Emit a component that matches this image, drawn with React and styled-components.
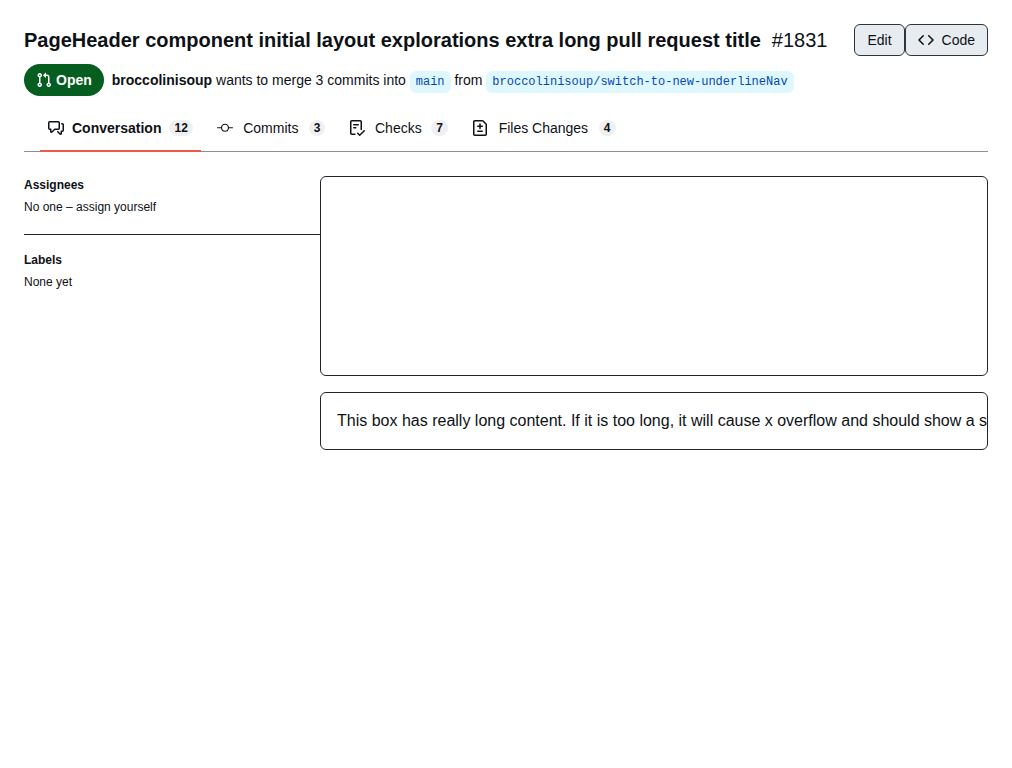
import React from 'react';
import styled, { createGlobalStyle } from 'styled-components';

const GlobalStyle = createGlobalStyle`
  * { box-sizing: border-box; }
  body {
    margin: 0;
    background: #fff;
    color: #0e1116;
    font-family: "Liberation Sans", Arial, sans-serif;
    font-size: 14px;
    line-height: 20px;
  }
`;

const Page = styled.div`
  padding: 24px;
`;

const TitleRow = styled.header`
  display: flex;
  align-items: center;
  height: 32px;
`;

const Title = styled.h1`
  margin: 0;
  font-size: 20px;
  font-weight: 700;
  line-height: 32px;
  white-space: nowrap;
`;

const Number = styled.span`
  margin-left: 11px;
  font-size: 20px;
  line-height: 32px;
`;

const Actions = styled.div`
  display: flex;
  margin-left: auto;
`;

const Button = styled.button`
  display: flex;
  align-items: center;
  gap: 8px;
  height: 32px;
  padding: 0 12px;
  border: 1px solid #2f353d;
  border-radius: 6px;
  background: #e7ecf0;
  color: #0e1116;
  font: 500 14px/20px "Liberation Sans", Arial, sans-serif;
`;

const Description = styled.div`
  display: flex;
  align-items: center;
  gap: 8px;
  height: 32px;
  margin-top: 8px;
`;

const StateLabel = styled.span`
  display: flex;
  align-items: center;
  gap: 4px;
  height: 32px;
  padding: 0 12px;
  border-radius: 16px;
  background: #055d20;
  color: #fff;
  font-weight: 700;
`;

const Summary = styled.div`
  padding-top: 2px;
  white-space: nowrap;
`;

const Branch = styled.a`
  padding: 4px 6px;
  border-radius: 6px;
  background: #dff7ff;
  color: #0349b4;
  font: 12px/20px "Liberation Mono", monospace;
`;

const Tabs = styled.nav`
  display: flex;
  gap: 8px;
  height: 48px;
  margin-top: 8px;
  padding: 0 16px;
  box-shadow: inset 0 -1px #88929d;
`;

const Tab = styled.a`
  display: flex;
  align-items: center;
  gap: 8px;
  padding: 0 8px;
  box-shadow: inset 0 -2px ${(p) => (p.$active ? '#ef5b48' : 'transparent')};
  font-weight: ${(p) => (p.$active ? 700 : 400)};
`;

/* The hidden bold copy keeps the width stable when a tab becomes active. */
const TabLabel = styled.span`
  display: inline-flex;
  flex-direction: column;
  align-items: center;
  height: 20px;

  &::after {
    content: attr(data-content);
    height: 0;
    visibility: hidden;
    font-weight: 700;
  }
`;

const Counter = styled.span`
  padding: 2px 5px;
  border-radius: 20px;
  background: #eff0f2;
  font-size: 12px;
  font-weight: 700;
  line-height: 12px;
`;

const Content = styled.div`
  display: flex;
  margin-top: 24px;
`;

const Sidebar = styled.aside`
  width: 296px;
  flex: none;
  font-size: 12px;
  line-height: 18px;
`;

const Section = styled.section`
  height: ${(p) => (p.$divided ? '59px' : 'auto')};
  border-bottom: ${(p) => (p.$divided ? '1px solid #20252c' : '0')};
  margin-bottom: 16px;
`;

const SectionTitle = styled.h2`
  margin: 0 0 4px;
  font-size: 12px;
  font-weight: 700;
  line-height: 18px;
`;

const Main = styled.main`
  display: flex;
  flex: 1;
  flex-direction: column;
  gap: 16px;
  min-width: 0;
`;

const Box = styled.div`
  height: ${(p) => p.$height};
  padding: 16px;
  overflow: hidden;
  border: 1px solid #20252c;
  border-radius: 6px;
  font-size: 16px;
  line-height: 24px;
  white-space: nowrap;
`;

const Glyph = styled.svg`
  display: block;
  flex: none;
  fill: currentColor;
`;

const paths = {
  pull: 'M1.5 3.25a2.25 2.25 0 1 1 3 2.122v5.256a2.251 2.251 0 1 1-1.5 0V5.372A2.25 2.25 0 0 1 1.5 3.25Zm5.677-.177L9.573.677A.25.25 0 0 1 10 .854V2.5h1A2.5 2.5 0 0 1 13.5 5v5.628a2.251 2.251 0 1 1-1.5 0V5a1 1 0 0 0-1-1h-1v1.646a.25.25 0 0 1-.427.177L7.177 3.427a.25.25 0 0 1 0-.354ZM3.75 2.5a.75.75 0 1 0 0 1.5.75.75 0 0 0 0-1.5Zm0 9.5a.75.75 0 1 0 0 1.5.75.75 0 0 0 0-1.5Zm8.25.75a.75.75 0 1 0 1.5 0 .75.75 0 0 0-1.5 0Z',
  discussion: 'M1.75 1h8.5c.966 0 1.75.784 1.75 1.75v5.5A1.75 1.75 0 0 1 10.25 10H7.061l-2.574 2.573A1.458 1.458 0 0 1 2 11.543V10h-.25A1.75 1.75 0 0 1 0 8.25v-5.5C0 1.784.784 1 1.75 1ZM1.5 2.75v5.5c0 .138.112.25.25.25h1a.75.75 0 0 1 .75.75v2.19l2.72-2.72a.749.749 0 0 1 .53-.22h3.5a.25.25 0 0 0 .25-.25v-5.5a.25.25 0 0 0-.25-.25h-8.5a.25.25 0 0 0-.25.25Zm13 2a.25.25 0 0 0-.25-.25h-.5a.75.75 0 0 1 0-1.5h.5c.966 0 1.75.784 1.75 1.75v5.5A1.75 1.75 0 0 1 14.25 12H14v1.543a1.458 1.458 0 0 1-2.487 1.03L9.22 12.28a.749.749 0 0 1 .326-1.275.749.749 0 0 1 .734.215l2.22 2.22v-2.19a.75.75 0 0 1 .75-.75h1a.25.25 0 0 0 .25-.25Z',
  commit: 'M11.97 8.25a4 4 0 0 1-7.94 0H.5a.5.5 0 0 1 0-1h3.53a4 4 0 0 1 7.94 0h3.53a.5.5 0 0 1 0 1Zm-1.07-.5a2.9 2.9 0 1 0-5.8 0 2.9 2.9 0 0 0 5.8 0Z',
  checklist: 'M2.5 1.75v11.5c0 .138.112.25.25.25h3.17a.75.75 0 0 1 0 1.5H2.75A1.75 1.75 0 0 1 1 13.25V1.75C1 .784 1.784 0 2.75 0h8.5C12.216 0 13 .784 13 1.75v7.736a.75.75 0 0 1-1.5 0V1.75a.25.25 0 0 0-.25-.25h-8.5a.25.25 0 0 0-.25.25Zm13.274 9.537v-.001l-4.557 4.45a.75.75 0 0 1-1.055-.008l-1.943-1.95a.75.75 0 0 1 1.062-1.058l1.419 1.425 4.026-3.932a.75.75 0 1 1 1.048 1.074ZM4.75 4h4.5a.75.75 0 0 1 0 1.5h-4.5a.75.75 0 0 1 0-1.5ZM4 7.75A.75.75 0 0 1 4.75 7h2a.75.75 0 0 1 0 1.5h-2A.75.75 0 0 1 4 7.75Z',
  diff: 'M1 1.75C1 .784 1.784 0 2.75 0h7.586c.464 0 .909.184 1.237.513l2.914 2.914c.329.328.513.773.513 1.237v9.586A1.75 1.75 0 0 1 13.25 16H2.75A1.75 1.75 0 0 1 1 14.25Zm1.75-.25a.25.25 0 0 0-.25.25v12.5c0 .138.112.25.25.25h10.5a.25.25 0 0 0 .25-.25V4.664a.25.25 0 0 0-.073-.177l-2.914-2.914a.25.25 0 0 0-.177-.073ZM8 3.25a.75.75 0 0 1 .75.75v1.5h1.5a.75.75 0 0 1 0 1.5h-1.5v1.5a.75.75 0 0 1-1.5 0V7h-1.5a.75.75 0 0 1 0-1.5h1.5V4A.75.75 0 0 1 8 3.25Zm-3 8a.75.75 0 0 1 .75-.75h4.5a.75.75 0 0 1 0 1.5h-4.5a.75.75 0 0 1-.75-.75Z',
  code: 'm11.28 3.22 4.25 4.25a.75.75 0 0 1 0 1.06l-4.25 4.25a.749.749 0 0 1-1.275-.326.749.749 0 0 1 .215-.734L13.94 8l-3.72-3.72a.749.749 0 0 1 .326-1.275.749.749 0 0 1 .734.215Zm-6.56 0a.751.751 0 0 1 1.042.018.751.751 0 0 1 .018 1.042L2.06 8l3.72 3.72a.749.749 0 0 1-.326 1.275.749.749 0 0 1-.734-.215L.47 8.53a.75.75 0 0 1 0-1.06Z',
};

const Icon = ({ name }) => (
  <Glyph width="16" height="16" viewBox="0 0 16 16" aria-hidden="true">
    <path d={paths[name]} />
  </Glyph>
);

const tabs = [
  { label: 'Conversation', icon: 'discussion', count: 12, active: true },
  { label: 'Commits', icon: 'commit', count: 3 },
  { label: 'Checks', icon: 'checklist', count: 7 },
  { label: 'Files Changes', icon: 'diff', count: 4 },
];

export default function App() {
  return (
    <Page>
      <GlobalStyle />
      <TitleRow>
        <Title>PageHeader component initial layout explorations extra long pull request title</Title>
        <Number>#1831</Number>
        <Actions>
          <Button>Edit</Button>
          <Button>
            <Icon name="code" />
            Code
          </Button>
        </Actions>
      </TitleRow>
      <Description>
        <StateLabel>
          <Icon name="pull" />
          Open
        </StateLabel>
        <Summary>
          <b>broccolinisoup</b> wants to merge 3 commits into <Branch>main</Branch> from{' '}
          <Branch>broccolinisoup/switch-to-new-underlineNav</Branch>
        </Summary>
      </Description>
      <Tabs>
        {tabs.map((t) => (
          <Tab key={t.label} $active={t.active}>
            <Icon name={t.icon} />
            <TabLabel data-content={t.label}>{t.label}</TabLabel>
            <Counter>{t.count}</Counter>
          </Tab>
        ))}
      </Tabs>
      <Content>
        <Sidebar>
          <Section $divided>
            <SectionTitle>Assignees</SectionTitle>
            No one – assign yourself
          </Section>
          <Section>
            <SectionTitle>Labels</SectionTitle>
            None yet
          </Section>
        </Sidebar>
        <Main>
          <Box $height="200px" />
          <Box $height="58px">
            This box has really long content. If it is too long, it will cause x overflow and should show a scrollbar.
          </Box>
        </Main>
      </Content>
    </Page>
  );
}
